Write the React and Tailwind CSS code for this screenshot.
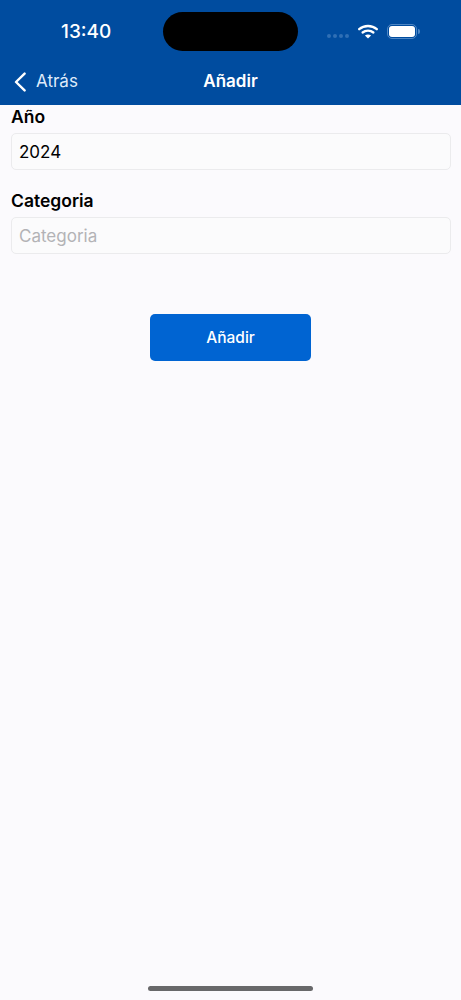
const Field = ({ label, value, placeholder }) => (
  <div className="flex flex-col">
    <label className="h-[28px] text-[17.5px] leading-[23px] font-semibold text-black">{label}</label>
    <input
      readOnly
      value={value}
      placeholder={placeholder}
      className="h-[37px] w-full rounded-[5px] border border-[#ebebed] bg-[#fbfbfc] px-[7px] text-[17px] text-black outline-none placeholder:text-[#b3b3b6]"
      style={{ fontFamily: "inherit" }}
    />
  </div>
);

const StatusBar = () => (
  <div className="flex h-[63px] items-start text-white">
    <span className="mt-[20px] ml-[61px] w-[102px] text-[19px] leading-[24px] font-[550]">13:40</span>
    <div className="mt-[12px] h-[39px] w-[135px] rounded-[20px] bg-black" />
    <div className="mt-[24px] ml-[29px] flex h-[14px] items-center">
      <div className="mt-[10px] flex gap-[2px]">
        <span className="h-[4px] w-[4px] rounded-full bg-[#2f6fb5]" />
        <span className="h-[4px] w-[4px] rounded-full bg-[#2f6fb5]" />
        <span className="h-[4px] w-[4px] rounded-full bg-[#2f6fb5]" />
        <span className="h-[4px] w-[4px] rounded-full bg-[#2f6fb5]" />
      </div>
      <svg className="ml-[9px]" width="20" height="15" viewBox="0 0 20 15" fill="none">
        <path d="M1.2 5.2C6 .9 14 .9 18.8 5.2" stroke="white" strokeWidth="2.3" strokeLinecap="round" />
        <path d="M4.6 8.5C7.6 6 12.4 6 15.4 8.5" stroke="white" strokeWidth="2.3" strokeLinecap="round" />
        <path d="M10 14.6 6.9 11.5C8.7 10.2 11.3 10.2 13.1 11.5Z" fill="white" />
      </svg>
      <div className="ml-[9px] flex items-center">
        <div className="flex h-[15px] w-[30px] items-center justify-center rounded-[5px] border border-[#4d86c4]">
          <div className="h-[11px] w-[26px] rounded-[3px] bg-white" />
        </div>
        <div className="ml-[1px] h-[5px] w-[1.5px] rounded-r-full bg-[#4d86c4]" />
      </div>
    </div>
  </div>
);

const App = () => {
  return (
    <div className="flex h-[1000px] flex-col overflow-hidden bg-[#fbfafd]" style={{ fontFamily: "Inter, 'Noto Sans', sans-serif" }}>
      <header className="h-[105px] shrink-0 bg-[#004c9f]">
        <StatusBar />
        <div className="relative flex h-[36px] items-center justify-center text-white">
          <div className="absolute top-[1px] left-[14px] flex h-full items-center gap-[10px]">
            <svg width="12" height="20" viewBox="0 0 12 20" fill="none">
              <path d="M10.6 1.6 2 10l8.6 8.4" stroke="white" strokeWidth="2.4" strokeLinecap="round" strokeLinejoin="round" />
            </svg>
            <span className="text-[17px] text-[#dfeafa]">Atrás</span>
          </div>
          <span className="mt-[2px] text-[17px] font-semibold">Añadir</span>
        </div>
      </header>

      <main className="flex flex-col pr-[10px] pl-[11px]">
        <div className="flex flex-col gap-[19px]">
          <Field label="Año" value="2024" />
          <Field label="Categoria" placeholder="Categoria" value="" />
        </div>
        <button className="mt-[60px] ml-[139px] h-[47px] w-[161px] self-start rounded-[5px] bg-[#0064d2] text-[15.5px] font-medium text-white">
          Añadir
        </button>
      </main>

      <div className="mt-auto mb-[9px] h-[5px] w-[165px] shrink-0 self-center rounded-full bg-[#68686a]" />
    </div>
  );
};

export default App;
